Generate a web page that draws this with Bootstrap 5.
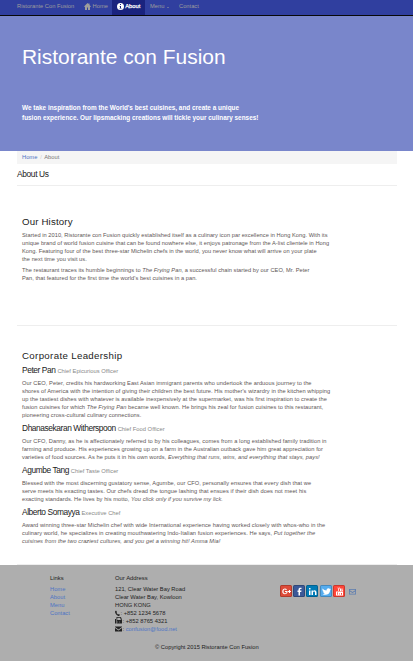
<!DOCTYPE html>
<html lang="en">
<head>
<meta charset="utf-8">
<meta name="viewport" content="width=device-width, initial-scale=1">
<title>Ristorante Con Fusion: About Us</title>
<link rel="stylesheet" href="https://cdn.jsdelivr.net/npm/bootstrap@5.3.0/dist/css/bootstrap.min.css">
<style>
body{font-family:"Liberation Sans",Arial,sans-serif;font-size:5.7px;line-height:8px;color:#5e5656;background:#fff;white-space:nowrap;overflow-x:hidden}
svg{fill:currentColor;display:inline-block;flex:none}
a{text-decoration:none;color:#4d74c4}
.topbar{height:16px;background:#303f9f;border-bottom:1px solid #080808;padding:0 0 0 17px;font-size:5.75px}
.topbar a{color:#9d9d9d;line-height:13px;height:15px}
.topbar .brand{width:67px}
.topbar .home{width:28px}
.topbar .current{background:#1a237e;color:#fff;width:33px;padding-left:5px;-webkit-text-stroke:.25px}
.topbar .menu{width:34px;padding-left:5px}
.caret{border:1.5px solid transparent;border-top-color:currentColor;border-bottom:0;margin-left:3px}
.hero{height:135px;background:#7986cb;color:#fff;padding:28px 22px 0}
.hero h1{font-size:20.95px;line-height:26px;font-weight:400;margin-bottom:33px}
.hero p{font-size:6.42px;line-height:10px;font-weight:700;margin:0}
.page{margin:0 16px 0 17px}
.crumbs{height:13px;line-height:12px;background:#f5f5f5;padding-left:5px;font-size:5.75px;color:#777}
.crumbs i{color:#ccc;font-style:normal;margin:0 1.2px}
h2,h3,h4{font-weight:400;color:#222;margin:0}
h3{font-size:8.4px;line-height:20px;letter-spacing:-.35px;padding-bottom:1px}
.section{border-top:1px solid #eee;padding-left:5px}
.history{height:140px;padding-top:29px}
.leaders{height:239px;padding-top:23px}
h2{font-size:9.7px;line-height:14px;letter-spacing:.15px}
.history h2{margin-bottom:2px}
.history p{margin:0 0 3px;letter-spacing:.035px}
.leaders h2{margin-bottom:2px;letter-spacing:.34px}
.leaders p{margin:0 0 4px;letter-spacing:.058px}
h4{font-size:8.4px;line-height:10px;height:10px;margin-bottom:4px;letter-spacing:-.42px}
h4 small{font-size:5.8px;color:#888;letter-spacing:0}
.foot{height:96px;background:#aeaeae;color:#222;padding:9px 0 0 50px;font-size:5.75px}
.foot h5{font-size:5.9px;line-height:8px;font-weight:400;margin:0 0 3px}
.foot .links{width:65px}
.foot .address{width:165px}
.foot .address svg{margin-right:.5px;vertical-align:-1px}
.top-row{height:69px}
.social{padding-top:11px;gap:1.2px}
.social span{width:12px;height:12px;border-radius:1.5px;color:#fff;border:.5px solid rgba(0,0,0,.2)}
.social .g{background:#dd4b39}.social .f{background:#3b5998}.social .l{background:#007bb6}.social .t{background:#55acee}.social .y{background:#ff4538}
.social .m{background:none;border:0;color:#5b7cb0;margin-left:1px;padding-top:1px}
.copy{margin-left:105px}
</style>
</head>
<body>
<nav class="topbar d-flex">
<a class="brand" href="#">Ristorante Con Fusion</a>
<a class="home" href="#"><svg width="7" height="7" viewBox="0 0 14 14"><path d="M7 0 0 7l1 1 1-.8V14h4V9h2v5h4V7.2l1 .8 1-1-3-3V1H9v1z"/></svg> Home</a>
<a class="current" href="#"><svg width="7" height="7" viewBox="0 0 14 14"><path fill-rule="evenodd" d="M7 0a7 7 0 1 0 0 14A7 7 0 0 0 7 0M6 2h2v2H6zM5 6h3v4h1v1H5v-1h1V7H5z"/></svg> About</a>
<a class="menu d-flex align-items-baseline" href="#">Menu <span class="caret align-self-center"></span></a>
<a href="#">Contact</a>
</nav>
<header class="hero">
<h1>Ristorante con Fusion</h1>
<p>We take inspiration from the World's best cuisines, and create a unique<br>fusion experience. Our lipsmacking creations will tickle your culinary senses!</p>
</header>
<main class="page">
<div class="crumbs"><a href="#">Home</a> <i>/</i> About</div>
<h3>About Us</h3>
<section class="section history">
<h2>Our History</h2>
<p>Started in 2010, Ristorante con Fusion quickly established itself as a culinary icon par excellence in Hong Kong. With its<br>unique brand of world fusion cuisine that can be found nowhere else, it enjoys patronage from the A-list clientele in Hong<br>Kong. Featuring four of the best three-star Michelin chefs in the world, you never know what will arrive on your plate<br>the next time you visit us.</p>
<p>The restaurant traces its humble beginnings to <em>The Frying Pan</em>, a successful chain started by our CEO, Mr. Peter<br>Pan, that featured for the first time the world's best cuisines in a pan.</p>
</section>
<section class="section leaders">
<h2>Corporate Leadership</h2>
<h4>Peter Pan <small>Chief Epicurious Officer</small></h4>
<p>Our CEO, Peter, credits his hardworking East Asian immigrant parents who undertook the arduous journey to the<br>shores of America with the intention of giving their children the best future. His mother's wizardry in the kitchen whipping<br>up the tastiest dishes with whatever is available inexpensively at the supermarket, was his first inspiration to create the<br>fusion cuisines for which <em>The Frying Pan</em> became well known. He brings his zeal for fusion cuisines to this restaurant,<br>pioneering cross-cultural culinary connections.</p>
<h4>Dhanasekaran Witherspoon <small>Chief Food Officer</small></h4>
<p>Our CFO, Danny, as he is affectionately referred to by his colleagues, comes from a long established family tradition in<br>farming and produce. His experiences growing up on a farm in the Australian outback gave him great appreciation for<br>varieties of food sources. As he puts it in his own words, <em>Everything that runs, wins, and everything that stays, pays!</em></p>
<h4>Agumbe Tang <small>Chief Taste Officer</small></h4>
<p>Blessed with the most discerning gustatory sense, Agumbe, our CFO, personally ensures that every dish that we<br>serve meets his exacting tastes. Our chefs dread the tongue lashing that ensues if their dish does not meet his<br>exacting standards. He lives by his motto, <em>You click only if you survive my lick.</em></p>
<h4>Alberto Somayya <small>Executive Chef</small></h4>
<p>Award winning three-star Michelin chef with wide International experience having worked closely with whos-who in the<br>culinary world, he specializes in creating mouthwatering Indo-Italian fusion experiences. He says, <em>Put together the<br>cuisines from the two craziest cultures, and you get a winning hit! Amma Mia!</em></p>
</section>
<div class="section"></div>
</main>
<footer class="foot">
<div class="top-row d-flex">
<div class="links"><h5>Links</h5><a href="#">Home</a><br><a href="#">About</a><br><a href="#">Menu</a><br><a href="#">Contact</a></div>
<div class="address"><h5>Our Address</h5>121, Clear Water Bay Road<br>Clear Water Bay, Kowloon<br>HONG KONG<br>
<svg width="5" height="6" viewBox="0 0 10 12"><path d="M2 1 4 4 3 6l3 3 2-1 2 2-2 2C4 12 0 7 0 3z"/></svg>: +852 1234 5678<br>
<svg width="7" height="7" viewBox="0 0 14 14"><path fill-rule="evenodd" d="M0 4h2v9H0zM3 0h8l2 2v3h1v8H3zm1.500 1.500V6h7V3H10V1.500zM5 8v1h1V8zm3 0v1h1V8zm-3 2v1h1v-1zm3 0v1h1v-1z"/></svg>: +852 8765 4321<br>
<svg width="7" height="6" viewBox="0 0 14 12"><path d="M0 1h14v1L7 7 0 2zM0 4l7 5 7-5v7H0z"/></svg>: <a href="#">confusion@food.net</a></div>
<div class="social d-flex">
<span class="g"><svg width="11" height="11" viewBox="0 0 22 22"><path d="M8 10v2h3c-.5 4-6 3.500-6-1s4-4.500 5-2.500L12 7C8.500 3 2.500 5.500 2.500 11S8 18 11.500 15c1.500-1.500 2-3 1.500-5zM16 8h2v2h2v2h-2v2h-2v-2h-2v-2h2z"/></svg></span>
<span class="f"><svg width="11" height="11" viewBox="0 0 22 22"><path d="M9 19v-7H7V9h2V7c0-3 2-4 6-3.500V6c-2 0-3 0-3 1.500V9h3l-.5 3H12v7z"/></svg></span>
<span class="l"><svg width="11" height="11" viewBox="0 0 22 22"><path d="M4 9h3v9H4zM4 4h3v3H4zM9 9h3v1c2-2.500 7-1.500 7 3v5h-3v-5c0-3-4-3-4 0v5H9z"/></svg></span>
<span class="t"><svg width="11" height="11" viewBox="0 0 22 22"><path d="M3 5c2 2.500 5 4 8 4 0-5 5-6 7-3l2-.5-1.500 2.500C18 17 9 20 3 16c2 0 4-.5 5-1.500-2 0-3-1-3.500-2.500H6c-2-.5-3-2-3-3.500l1.500.5C3 8 2 6.500 3 5z"/></svg></span>
<span class="y"><svg width="11" height="11" viewBox="0 0 22 22"><path fill-rule="evenodd" d="M7 3h1.500l1 3 1-3H12l-2 4v3H8.500V7zM12 5h2v5h-2zM15 5h1v4h1V5h1v5h-3zM4 11h14v8H4zm2 1.500v5h1.500v-5zm4 1.500v3.500h1V14zm4 0v3.500h2V14z"/></svg></span>
<span class="m"><svg width="11" height="11" viewBox="0 0 22 22"><path fill-rule="evenodd" d="M4 6h14v11H4zm1.500 1.500v1L11 12l5.500-3.500v-1zm0 3v5h11v-5L11 14z"/></svg></span>
</div>
</div>
<div class="copy">© Copyright 2015 Ristorante Con Fusion</div>
</footer>
<script src="https://cdn.jsdelivr.net/npm/bootstrap@5.3.0/dist/js/bootstrap.bundle.min.js"></script>
</body>
</html>
